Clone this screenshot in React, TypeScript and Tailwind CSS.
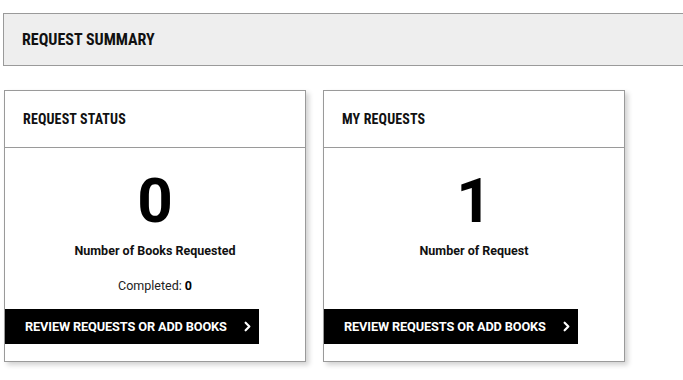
import { ChevronRight } from 'lucide-react';

const CARDS = [
  { title: 'REQUEST STATUS', count: 0, label: 'Number of Books Requested', completed: 0 },
  { title: 'MY REQUESTS', count: 1, label: 'Number of Request', completed: null },
] as const;

function SummaryCard({ card }: { card: (typeof CARDS)[number] }) {
  return (
    <div className="w-[302px] h-[272px] flex flex-col border border-[#9a9a9a] bg-white shadow-[3px_3px_5px_rgba(0,0,0,0.18)]">
      <div className="h-[57px] shrink-0 flex items-center pl-[18px] border-b border-[#9a9a9a]">
        <h2 className="text-[14px] font-bold text-[#111] font-stretch-condensed tracking-[0.01em]">
          {card.title}
        </h2>
      </div>
      <div className="flex-1 flex flex-col items-center pt-[22px]">
        <p className="text-[62px] leading-[62px] font-bold text-black">{card.count}</p>
        <p className="mt-[11px] text-[12.5px] leading-[16px] font-bold text-[#111]">{card.label}</p>
        <p className="mt-[19px] h-[16px] text-[12.5px] leading-[16px] text-[#222]">
          {card.completed !== null && (
            <>
              Completed: <span className="font-bold text-black">{card.completed}</span>
            </>
          )}
        </p>
      </div>
      <button className="self-start mb-[17px] w-[254px] h-[35px] bg-black text-white flex items-center pl-[20px] gap-[13px]">
        <span className="text-[12.75px] font-bold tracking-[-0.01em]">REVIEW REQUESTS OR ADD BOOKS</span>
        <ChevronRight className="w-[15px] h-[15px]" strokeWidth={3.5} />
      </button>
    </div>
  );
}

export default function App() {
  return (
    <main className="min-h-screen bg-white font-['Roboto',sans-serif] overflow-hidden pt-[13px] pl-[3px]">
      <div className="h-[53px] -mr-[20px] flex items-center pl-[18px] border border-[#9a9a9a] bg-[#eeeeee]">
        <h1 className="text-[16px] font-bold text-[#111] font-stretch-condensed">REQUEST SUMMARY</h1>
      </div>
      <div className="mt-[24px] pl-[1px] flex gap-[17px]">
        {CARDS.map((card) => (
          <SummaryCard key={card.title} card={card} />
        ))}
      </div>
    </main>
  );
}
